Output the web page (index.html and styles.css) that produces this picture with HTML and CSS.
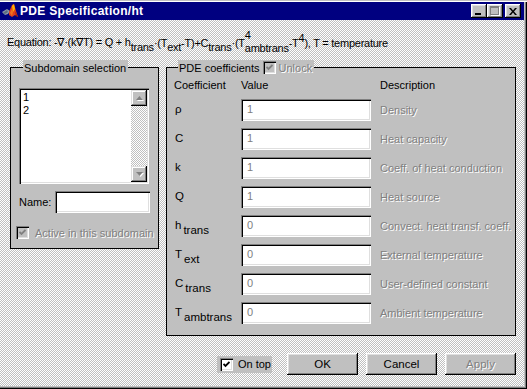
FILE: index.html
```html
<!DOCTYPE html>
<html>
<head>
<meta charset="utf-8">
<link rel="stylesheet" href="styles.css">
</head>
<body>
<div class="window">
  <div class="titlebar">
    <svg class="app-icon" width="16" height="16" viewBox="0 0 16 16">
      <polygon points="0,9 5,6 8,8 6,11 3,12" fill="#8a97a8"/>
      <polygon points="1,10 5,7 6,9 3,11" fill="#5d6b80"/>
      <polygon points="7,9 10,2 12,1 14,8 16,14 13,12 10,14 7,12" fill="#e0401c"/>
      <polygon points="10,3 12,1 13,6 11,9" fill="#ffb000"/>
      <polygon points="8,10 10,6 11,9 10,13" fill="#f07020"/>
      <polygon points="13,8 16,14 14,13" fill="#a01800"/>
    </svg>
    <span class="title">PDE Specification/ht</span>
    <div class="tb-buttons">
      <span class="tb-btn"><i class="min-glyph"></i></span>
      <span class="tb-btn"><i class="max-glyph"></i></span>
      <span class="tb-btn close-btn">
        <svg width="8" height="7" viewBox="0 0 8 7"><path d="M0 0h2l2 2.5L6 0h2L5 3.5 8 7H6L4 4.5 2 7H0l3-3.5z" fill="#000"/></svg>
      </span>
    </div>
  </div>

  <div class="equation">Equation: -∇·(k∇T) = Q + h<span class="sub">trans</span>·(T<span class="sub">ext</span>-T)+C<span class="sub">trans</span>·(T<span class="supsub"><span class="sup">4</span><span class="sb">ambtrans</span></span>-T<span class="sup">4</span>), T = temperature</div>

  <div class="content">
    <div class="frame subdomain">
      <div class="legend">Subdomain selection</div>
      <div class="listbox">
        <div class="items"><div>1</div><div>2</div></div>
        <div class="scrollbar">
          <span class="sb-btn"><svg width="7" height="4" viewBox="0 0 7 4"><polygon points="3.5,0 7,4 0,4" fill="#808080"/></svg></span>
          <span class="sb-track"></span>
          <span class="sb-btn"><svg width="7" height="4" viewBox="0 0 7 4"><polygon points="0,0 7,0 3.5,4" fill="#808080"/></svg></span>
        </div>
      </div>
      <div class="name-row"><span>Name:</span><span class="edit name-edit"></span></div>
      <div class="check-row">
        <span class="box box-disabled"><svg width="7" height="7" viewBox="0 0 7 7"><polyline points="0.5,3 2.5,5 6.5,1" fill="none" stroke="#808080" stroke-width="1.8"/></svg></span>
        <span class="dis">Active in this subdomain</span>
      </div>
    </div>

    <div class="frame coeffs">
      <div class="legend"><span>PDE coefficients</span><span class="box box-disabled"><svg width="7" height="7" viewBox="0 0 7 7"><polyline points="0.5,3 2.5,5 6.5,1" fill="none" stroke="#808080" stroke-width="1.8"/></svg></span><span class="dis">Unlock</span></div>
      <div class="grid">
        <span class="hdr">Coefficient</span><span class="hdr">Value</span><span class="hdr desc">Description</span>

        <span class="lbl">ρ</span><span class="edit val">1</span><span class="desc dis">Density</span>
        <span class="lbl">C</span><span class="edit val">1</span><span class="desc dis">Heat capacity</span>
        <span class="lbl">k</span><span class="edit val">1</span><span class="desc dis">Coeff. of heat conduction</span>
        <span class="lbl">Q</span><span class="edit val">1</span><span class="desc dis">Heat source</span>
        <span class="lbl">h<span class="lsub">trans</span></span><span class="edit val">0</span><span class="desc dis">Convect. heat transf. coeff.</span>
        <span class="lbl">T<span class="lsub">ext</span></span><span class="edit val">0</span><span class="desc dis">External temperature</span>
        <span class="lbl">C<span class="lsub">trans</span></span><span class="edit val">0</span><span class="desc dis">User-defined constant</span>
        <span class="lbl">T<span class="lsub">ambtrans</span></span><span class="edit val">0</span><span class="desc dis">Ambient temperature</span>
      </div>
    </div>
  </div>

  <div class="footer">
    <div class="ontop">
      <span class="box"><svg width="7" height="7" viewBox="0 0 7 7"><polyline points="0.5,3 2.5,5 6.5,1" fill="none" stroke="#000" stroke-width="1.8"/></svg></span>
      <span>On top</span>
    </div>
    <span class="btn">OK</span>
    <span class="btn">Cancel</span>
    <span class="btn dis">Apply</span>
  </div>
</div>
</body>
</html>
```

FILE: styles.css
```css
* { box-sizing: border-box; }

body {
  margin: 0;
  font-family: "Liberation Sans", Arial, sans-serif;
  font-size: 11px;
  color: #000;
}

.window {
  width: 527px;
  height: 389px;
  display: flex;
  flex-direction: column;
  padding: 2px 3px 3px 0;
  background: repeating-conic-gradient(#c0c0c0 0 25%, #ffffff 0 50%) 0 0 / 2px 2px;
  box-shadow: inset 0 1px #c0c0c0, inset 0 2px #fff, inset -1px -1px #000, inset -2px -2px #808080, inset -3px -3px #c0c0c0;
}

/* Title bar */
.titlebar {
  height: 18px;
  flex: none;
  display: flex;
  align-items: center;
  background: #000080;
  color: #fff;
  padding-left: 2px;
}
.app-icon { flex: none; }
.title {
  margin-left: 2px;
  font-weight: bold;
  font-size: 12px;
  letter-spacing: 0.3px;
}
.tb-buttons {
  margin-left: auto;
  display: flex;
  padding-right: 3px;
}
.tb-btn {
  width: 16px;
  height: 14px;
  background: #c0c0c0;
  box-shadow: inset -1px -1px #000, inset 1px 1px #fff, inset -2px -2px #808080, inset 2px 2px #dfdfdf;
  position: relative;
  display: flex;
  align-items: center;
  justify-content: center;
}
.close-btn { margin-left: 2px; }
.min-glyph {
  position: absolute;
  left: 4px;
  top: 9px;
  width: 6px;
  height: 2px;
  background: #000;
}
.max-glyph {
  position: absolute;
  left: 3px;
  top: 2px;
  width: 9px;
  height: 9px;
  border: 1px solid #808080;
  border-top-width: 2px;
  box-shadow: 1px 1px #fff;
}

/* Equation */
.equation {
  height: 44px;
  flex: none;
  display: flex;
  align-items: center;
  padding-left: 7px;
  padding-top: 1px;
  white-space: nowrap;
  font-size: 11px;
  letter-spacing: -0.25px;
}
.sub {
  position: relative;
  top: 4px;
}
.sup {
  position: relative;
  top: -5px;
}
.supsub {
  display: inline-flex;
  flex-direction: column;
  line-height: 10px;
}
.supsub .sup { top: -3px; }

/* Content */
.content {
  display: flex;
  align-items: flex-start;
  padding-left: 10px;
  gap: 7px;
  margin-top: 3px;
  flex: none;
}
.frame {
  background: #c0c0c0;
  border: 1px solid #000;
  display: flex;
  flex-direction: column;
  align-items: flex-start;
  flex: none;
}
.legend {
  margin: -8px 0 0 4px;
  height: 15px;
  padding: 0 2px 0 1px;
  background: #c0c0c0;
  display: flex;
  align-items: center;
  gap: 3px;
  white-space: nowrap;
}
.subdomain {
  width: 149px;
  height: 182px;
  padding-left: 8px;
}
.coeffs {
  width: 350px;
  height: 269px;
  padding-left: 7px;
}

/* Listbox */
.listbox {
  margin-top: 13px;
  width: 130px;
  height: 96px;
  background: #fff;
  box-shadow: inset 1px 1px #808080, inset 2px 2px #000, inset -1px -1px #fff, inset -2px -2px #dfdfdf;
  padding: 2px;
  display: flex;
}
.items {
  flex: 1;
  padding: 1px 0 0 2px;
  line-height: 13px;
}
.scrollbar {
  width: 16px;
  display: flex;
  flex-direction: column;
}
.sb-btn {
  height: 16px;
  flex: none;
  background: #c0c0c0;
  box-shadow: inset -1px -1px #000, inset 1px 1px #dfdfdf, inset -2px -2px #808080, inset 2px 2px #fff;
  display: flex;
  align-items: center;
  justify-content: center;
}
.sb-btn svg { filter: drop-shadow(1px 1px 0 #fff); }
.sb-track {
  flex: 1;
  background: repeating-conic-gradient(#c0c0c0 0 25%, #ffffff 0 50%) 0 0 / 2px 2px;
}

/* Edits */
.edit {
  background: #fff;
  box-shadow: inset 1px 1px #808080, inset 2px 2px #000, inset -1px -1px #fff, inset -2px -2px #dfdfdf;
}
.name-row {
  margin-top: 7px;
  display: flex;
  align-items: center;
  width: 131px;
}
.name-edit {
  margin-left: auto;
  width: 95px;
  height: 22px;
}

/* Checkbox */
.box {
  width: 13px;
  height: 13px;
  flex: none;
  background: #fff;
  box-shadow: inset 1px 1px #808080, inset 2px 2px #000, inset -1px -1px #fff, inset -2px -2px #dfdfdf;
  display: inline-flex;
  align-items: center;
  justify-content: center;
}
.box-disabled { background: #c0c0c0; }
.check-row {
  margin: 13px 0 0 -3px;
  display: flex;
  align-items: center;
  gap: 6px;
  white-space: nowrap;
}
.dis {
  color: #808080;
  text-shadow: 1px 1px 0 #fff;
}

/* Coefficient grid */
.grid {
  margin-top: 3px;
  display: grid;
  grid-template-columns: 67px 130px 1fr;
  grid-template-rows: 14px repeat(8, 22px);
  row-gap: 7px;
  width: 100%;
  align-items: center;
}
.hdr { line-height: 14px; }
.desc { margin-left: 9px; white-space: nowrap; }
.lbl {
  padding-left: 1px;
  font-size: 11.5px;
  position: relative;
  top: -1px;
}
.lsub {
  position: relative;
  top: 5px;
  margin-left: 2px;
}
.val {
  height: 22px;
  color: #808080;
  padding: 2px 0 0 6px;
  line-height: 16px;
}

/* Footer */
.footer {
  margin-top: 17px;
  display: flex;
  align-items: center;
  justify-content: flex-end;
  padding-right: 8px;
  gap: 8px;
}
.ontop {
  background: #c0c0c0;
  height: 17px;
  display: flex;
  align-items: center;
  gap: 5px;
  padding: 0 1px 0 3px;
  margin-right: 7px;
  white-space: nowrap;
}
.btn {
  width: 71px;
  height: 22px;
  background: #c0c0c0;
  box-shadow: inset -1px -1px #000, inset 1px 1px #fff, inset -2px -2px #808080, inset 2px 2px #dfdfdf;
  display: flex;
  align-items: center;
  justify-content: center;
  font-size: 11.5px;
}
```
